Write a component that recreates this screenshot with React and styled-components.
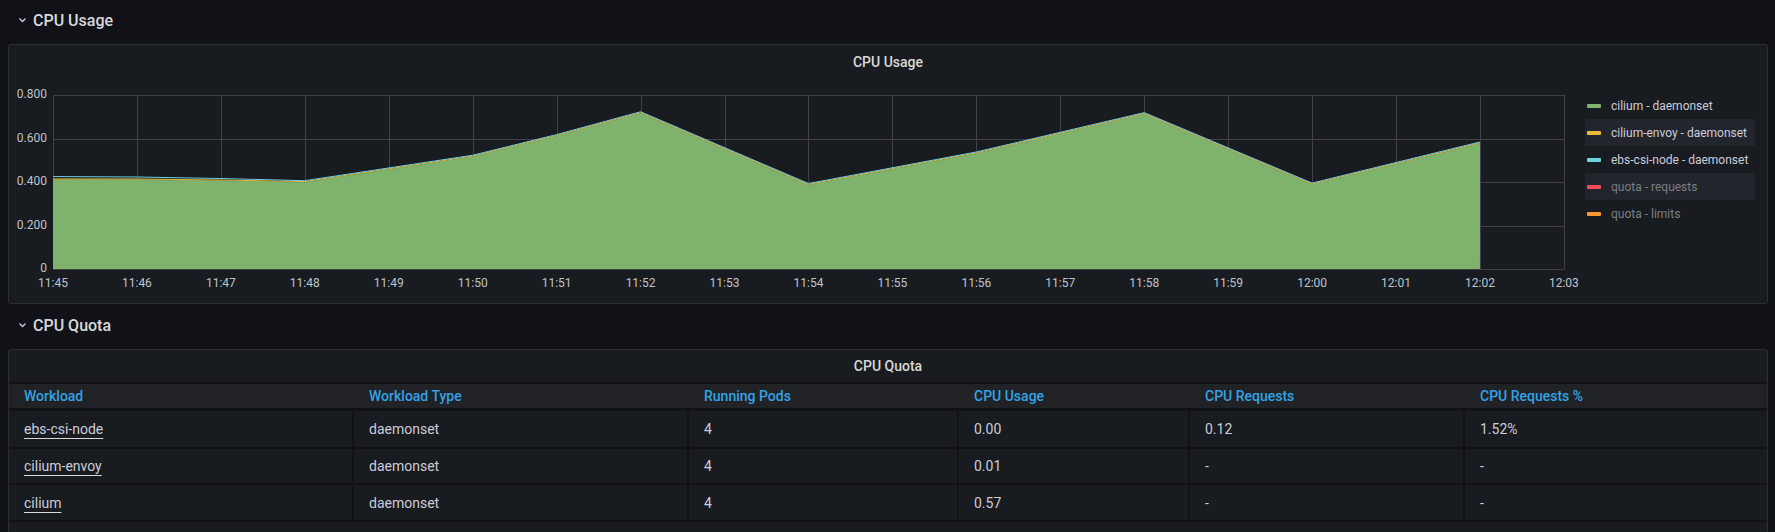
import React from 'react';
import styled, { createGlobalStyle } from 'styled-components';

const GlobalStyle = createGlobalStyle`
    body {
        margin: 0;
        background: #111217;
    }
`;

const Page = styled.div`
    background: #111217;
    min-height: 532px;
    padding: 0 7px 0 8px;
    font-family: Roboto, "Liberation Sans", sans-serif;
    color: #ccccdc;
    overflow: hidden;
`;

const RowHeader = styled.div`
    height: 40px;
    display: flex;
    align-items: center;
    gap: 6px;
    padding-left: 10px;
    margin: ${({first}) => first ? '0 0 4px 0' : '1px 0 4px 0'};
    font-size: 16px;
    font-weight: 500;
    color: #d8d9da;
`;

const Panel = styled.div`
    background: #181b1f;
    border: 1px solid #2b2d32;
    border-radius: 2px;
    height: ${({h}) => h ? h + 'px' : 'auto'};
    overflow: hidden;
`;

const PanelTitle = styled.div`
    height: ${({h}) => h || 33}px;
    display: flex;
    align-items: center;
    justify-content: center;
    font-size: 14px;
    font-weight: 500;
    color: #d8d9da;
`;

const GraphBody = styled.div`
    display: flex;
    align-items: flex-start;
`;

const Legend = styled.div`
    margin: 14px 0 0 14px;
    width: 170px;
    display: flex;
    flex-direction: column;
`;

const LegendRow = styled.div`
    height: 27px;
    display: flex;
    align-items: center;
    gap: 10px;
    padding-left: 2px;
    font-size: 12px;
    background: ${({striped}) => striped ? '#22252b' : 'transparent'};
    color: ${({dim}) => dim ? '#7b7e85' : '#ccccdc'};
    white-space: nowrap;
`;

const Swatch = styled.span`
    width: 14px;
    height: 4px;
    border-radius: 1px;
    background: ${({color}) => color};
`;

const Table = styled.div`
    background: #111217;
    display: flex;
    flex-direction: column;
    gap: 2px;
    padding: 2px 0;
    font-size: 14px;
`;

const cols = '343px 333px 268px 229px 273px 1fr';

const HeadRow = styled.div`
    display: grid;
    grid-template-columns: ${cols};
    column-gap: 2px;
    height: 24px;
    margin-bottom: 1px;
    background: #202226;
    align-items: center;
`;

const HeadCell = styled.div`
    padding-left: 15px;
    color: #33a2e5;
    font-weight: 500;
`;

const BodyRow = styled.div`
    display: grid;
    grid-template-columns: ${cols};
    column-gap: 2px;
    height: ${({h}) => h}px;
`;

const Cell = styled.div`
    background: #181b1f;
    padding-left: 15px;
    display: flex;
    align-items: center;
    color: #ccccdc;
`;

const CellLink = styled.span`
    text-decoration: underline;
    text-decoration-color: #d8d9da;
    text-underline-offset: 4px;
`;

const ChartSvg = styled.svg`
    display: block;
    flex: none;
    overflow: visible;
`;

const Chevron = () => (
    <svg width="9" height="6" viewBox="0 0 9 6">
        <path d="M1.5 1.5 L4.5 4.5 L7.5 1.5" fill="none" stroke="#ccccdc" strokeWidth="1.3" />
    </svg>
);

// minutes since 11:45 -> value
const series = [
    [0, 0.41], [1, 0.41], [2, 0.405], [3, 0.398], [5, 0.515], [6, 0.61],
    [7, 0.715], [9, 0.385], [11, 0.53], [13, 0.711], [15, 0.387], [17, 0.576],
];

const X0 = 44;
const XSTEP = 83.94;
const Y0 = 191;
const YSCALE = 217.5;
const px = t => X0 + t * XSTEP;
const py = v => Y0 - v * YSCALE;

const times = ['11:45', '11:46', '11:47', '11:48', '11:49', '11:50', '11:51', '11:52', '11:53',
    '11:54', '11:55', '11:56', '11:57', '11:58', '11:59', '12:00', '12:01', '12:02', '12:03'];
const yTicks = [0, 0.2, 0.4, 0.6, 0.8];

const Graph = () => {
    const line = off => series.map(([t, v]) => `${px(t)},${py(v + (typeof off === 'function' ? off(t) : off))}`).join(' ');
    const area = `${px(0)},${Y0} ${line(0)} ${px(17)},${Y0}`;
    return (
        <ChartSvg width="1562" height="220">
            <g stroke="#3f4146" strokeWidth="1" shapeRendering="crispEdges">
                {yTicks.map(v => <line key={v} x1={X0} x2={px(18)} y1={Math.round(py(v)) + 0.5} y2={Math.round(py(v)) + 0.5} />)}
                {times.map((_, i) => <line key={i} x1={Math.round(px(i)) + 0.5} x2={Math.round(px(i)) + 0.5} y1={py(0.8)} y2={Y0} />)}
            </g>
            <polygon points={area} fill="#7eb26d" />
            <polyline points={line(0)} fill="none" stroke="#7eb26d" strokeWidth="1" />
            <polyline points={line(0.004)} fill="none" stroke="#eab839" strokeWidth="1" />
            <polyline points={line(t => t < 3 ? 0.009 + (3 - t) * 0.002 : 0.008)} fill="none" stroke="#6ed0e0" strokeWidth="1" />
            <g fill="#bfc4cb" fontSize="12" fontFamily="Roboto, sans-serif">
                {yTicks.map(v => (
                    <text key={v} x="38" y={py(v)} textAnchor="end" dominantBaseline="middle">
                        {v === 0 ? '0' : v.toFixed(3)}
                    </text>
                ))}
                {times.map((tm, i) => (
                    <text key={tm} x={px(i)} y="206" textAnchor="middle" dominantBaseline="middle">{tm}</text>
                ))}
            </g>
        </ChartSvg>
    );
};

const legend = [
    {name: 'cilium - daemonset', color: '#7eb26d'},
    {name: 'cilium-envoy - daemonset', color: '#eab839'},
    {name: 'ebs-csi-node - daemonset', color: '#6ed0e0'},
    {name: 'quota - requests', color: '#f2495c', dim: true},
    {name: 'quota - limits', color: '#ff9830', dim: true},
];

const headers = ['Workload', 'Workload Type', 'Running Pods', 'CPU Usage', 'CPU Requests', 'CPU Requests %'];

const rows = [
    {name: 'ebs-csi-node', type: 'daemonset', pods: '4', usage: '0.00', req: '0.12', pct: '1.52%', h: 36},
    {name: 'cilium-envoy', type: 'daemonset', pods: '4', usage: '0.01', req: '-', pct: '-', h: 34},
    {name: 'cilium', type: 'daemonset', pods: '4', usage: '0.57', req: '-', pct: '-', h: 35},
];

const App = () => (
    <Page>
        <GlobalStyle />
        <RowHeader first><Chevron />CPU Usage</RowHeader>
        <Panel h={258}>
            <PanelTitle>CPU Usage</PanelTitle>
            <GraphBody>
                <Graph />
                <Legend>
                    {legend.map((l, i) => (
                        <LegendRow key={l.name} striped={i % 2 === 1} dim={l.dim}>
                            <Swatch color={l.color} />
                            {l.name}
                        </LegendRow>
                    ))}
                </Legend>
            </GraphBody>
        </Panel>
        <RowHeader><Chevron />CPU Quota</RowHeader>
        <Panel h={200}>
            <PanelTitle h={32}>CPU Quota</PanelTitle>
            <Table>
                <HeadRow>
                    {headers.map(h => <HeadCell key={h}>{h}</HeadCell>)}
                </HeadRow>
                {rows.map(r => (
                    <BodyRow key={r.name} h={r.h}>
                        <Cell><CellLink>{r.name}</CellLink></Cell>
                        <Cell>{r.type}</Cell>
                        <Cell>{r.pods}</Cell>
                        <Cell>{r.usage}</Cell>
                        <Cell>{r.req}</Cell>
                        <Cell>{r.pct}</Cell>
                    </BodyRow>
                ))}
            </Table>
        </Panel>
    </Page>
);

export default App;
